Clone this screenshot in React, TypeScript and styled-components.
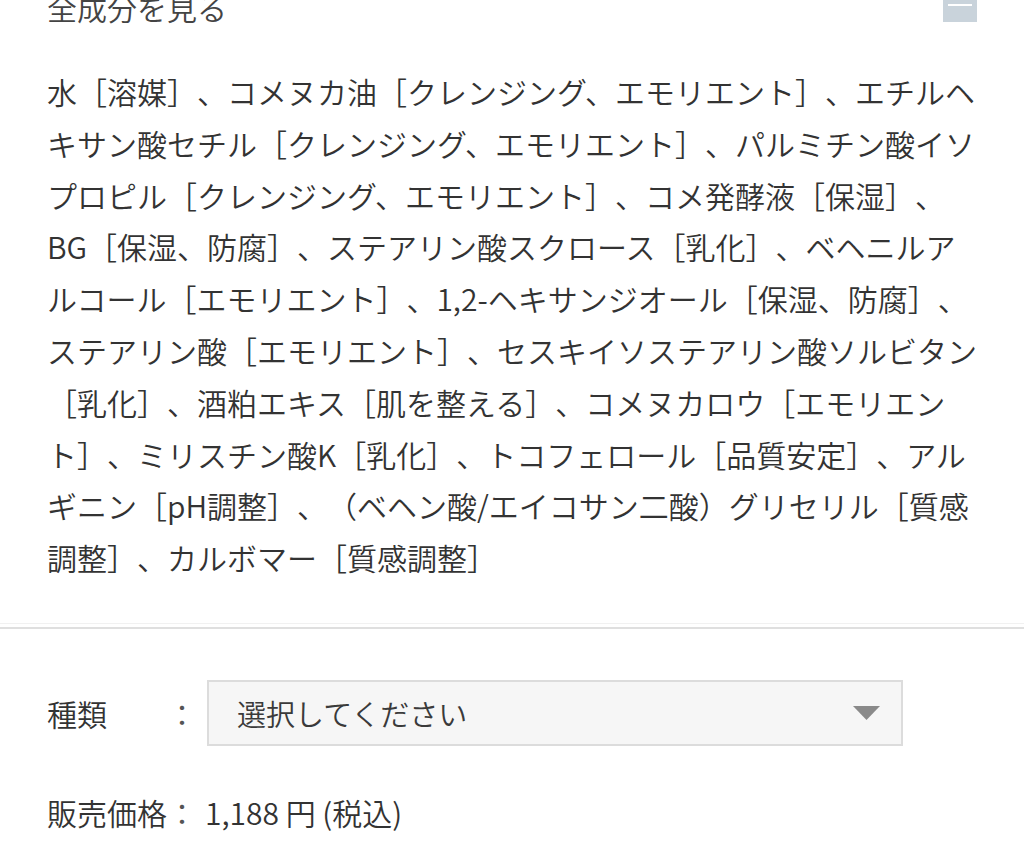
import { createGlobalStyle, styled } from "styled-components";

const GlobalStyle = createGlobalStyle`
  html, body {
    margin: 0;
    padding: 0;
    background: #ffffff;
  }
  body {
    font-family: "Noto Sans CJK JP", "Noto Sans", sans-serif;
    font-weight: 350;
    color: #333333;
  }
`;

const Page = styled.div`
  width: 1024px;
  /* page is scrolled: heading row sits partly above the window */
  margin-top: -19px;
`;

const Section = styled.section`
  padding: 0 47px 39px;
`;

const Header = styled.div`
  display: flex;
  align-items: center;
  justify-content: space-between;
  height: 52px;
`;

const Title = styled.div`
  font-size: 30px;
  line-height: 52px;
  color: #444444;
`;

const ToggleButton = styled.button`
  width: 34px;
  height: 34px;
  border: none;
  padding: 0;
  margin-top: -4px;
  background: #c9d3db;
  display: flex;
  align-items: center;
  justify-content: center;

  span {
    display: block;
    width: 24px;
    height: 2px;
    background: #ffffff;
  }
`;

const Ingredients = styled.p`
  margin: 33px 0 0;
  width: 930px;
  font-size: 30px;
  line-height: 51.8px;
  color: #333333;
  text-spacing-trim: space-all;
  word-break: normal;
  line-break: normal;
`;

const Divider = styled.div`
  height: 3px;
  border-top: 1px solid #f1f1f1;
  border-bottom: 2px solid #dfdfdf;
`;

const Form = styled.div`
  padding: 51px 47px 0;
  display: flex;
  flex-direction: column;
  gap: 40px;
`;

const Row = styled.div`
  display: grid;
  grid-template-columns: 120px 30px auto;
  align-items: center;
  font-size: 30px;
  line-height: 52px;
  color: #333333;
`;

const Label = styled.span`
  white-space: nowrap;
`;

const Colon = styled.span`
  text-align: center;
  color: #555555;
`;

const Select = styled.div`
  width: 696px;
  height: 66px;
  box-sizing: border-box;
  margin-left: 10px;
  border: 2px solid #dcdcdc;
  background: #f6f6f6;
  display: flex;
  align-items: center;
  justify-content: space-between;
  padding: 0 21px 0 28px;
  font-size: 29px;
  color: #3a3a3a;
`;

const Arrow = styled.svg`
  width: 27px;
  height: 14px;
  fill: #8a8a8a;
`;

const Price = styled.span`
  margin-left: 8px;
  font-size: 30px;
  white-space: nowrap;
`;

const ingredients =
  "水［溶媒］、コメヌカ油［クレンジング、エモリエント］、エチルヘキサン酸セチル［クレンジング、エモリエント］、パルミチン酸イソプロピル［クレンジング、エモリエント］、コメ発酵液［保湿］、BG［保湿、防腐］、ステアリン酸スクロース［乳化］、ベヘニルアルコール［エモリエント］、1,2-ヘキサンジオール［保湿、防腐］、ステアリン酸［エモリエント］、セスキイソステアリン酸ソルビタン［乳化］、酒粕エキス［肌を整える］、コメヌカロウ［エモリエント］、ミリスチン酸K［乳化］、トコフェロール［品質安定］、アルギニン［pH調整］、（ベヘン酸/エイコサン二酸）グリセリル［質感調整］、カルボマー［質感調整］";

export default function App() {
  return (
    <>
      <GlobalStyle />
      <Page>
        <Section>
          <Header>
            <Title>全成分を見る</Title>
            <ToggleButton aria-label="閉じる">
              <span />
            </ToggleButton>
          </Header>
          <Ingredients>{ingredients}</Ingredients>
        </Section>
        <Divider />
        <Form>
          <Row>
            <Label>種類</Label>
            <Colon>：</Colon>
            <Select>
              <span>選択してください</span>
              <Arrow viewBox="0 0 27 14">
                <polygon points="0,0 27,0 13.5,14" />
              </Arrow>
            </Select>
          </Row>
          <Row>
            <Label>販売価格</Label>
            <Colon>：</Colon>
            <Price>1,188 円 (税込)</Price>
          </Row>
        </Form>
      </Page>
    </>
  );
}
